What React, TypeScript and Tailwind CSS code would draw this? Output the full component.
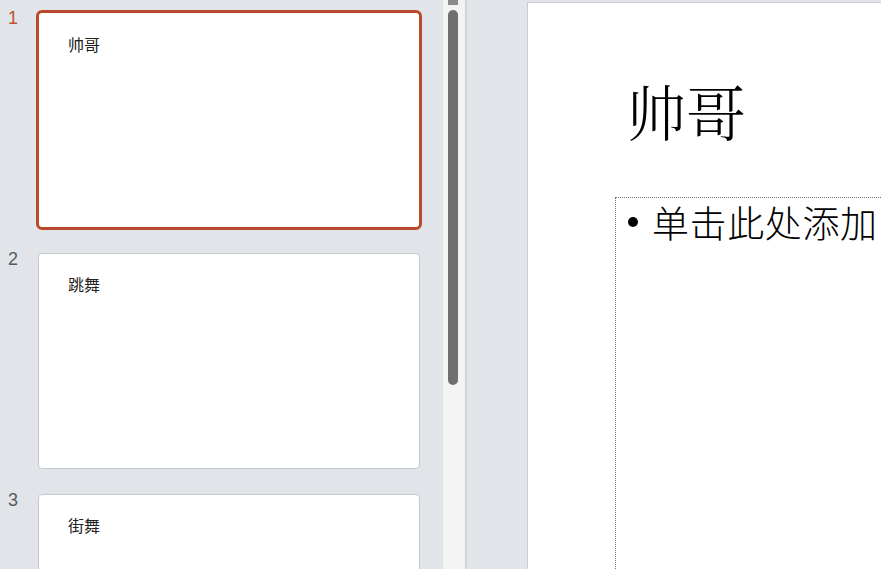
import React from "react";

type Slide = { title: string };

const slides: Slide[] = [{ title: "帅哥" }, { title: "跳舞" }, { title: "街舞" }];

const cjk = { fontFamily: '"Noto Sans CJK SC", "Noto Sans", sans-serif' };

function Thumb({ slide, index, active }: { slide: Slide; index: number; active: boolean }) {
  return (
    <div className="flex h-[241px] shrink-0">
      <div
        className={`w-[36px] pl-[8px] text-[18px] leading-[16px] ${
          active ? "text-[#c0502f]" : "text-[#555a60]"
        }`}
        style={{ fontFamily: '"Liberation Sans", sans-serif' }}
      >
        {index + 1}
      </div>
      <div className={`h-[220px] w-[386px] ${active ? "" : "p-[2px]"}`}>
        <div
          className={`h-full w-full bg-white ${
            active ? "rounded-[6px] border-[3px] border-[#b94a2c]" : "rounded-[4px] border border-[#c6c9cd]"
          }`}
        >
          <div
            className={`text-[16px] leading-[18px] text-[#222] ${active ? "pl-[29px] pt-[22px]" : "pl-[29px] pt-[21px]"}`}
            style={cjk}
          >
            {slide.title}
          </div>
        </div>
      </div>
    </div>
  );
}

export default function App() {
  return (
    <div className="flex h-[569px] w-[881px] overflow-hidden bg-[#e1e5ea]">
      {/* slide thumbnails */}
      <div className="flex w-[443px] shrink-0 flex-col overflow-hidden pt-[10px]">
        {slides.map((s, i) => (
          <Thumb key={i} slide={s} index={i} active={i === 0} />
        ))}
      </div>

      {/* vertical scrollbar */}
      <div className="flex w-[22px] shrink-0 flex-col items-center bg-[#f3f3f3] pr-[2px]">
        <div className="h-[5px] w-[10px] bg-[#8a8a8a]" />
        <div className="mt-[5px] h-[375px] w-[10px] rounded-full bg-[#6f6f6f]" />
      </div>
      <div className="w-[2px] shrink-0 bg-[#cfd3d8]" />

      {/* editing canvas */}
      <div className="flex flex-1 overflow-hidden pl-[60px] pt-[2px]">
        <div className="flex-1 border-l border-t border-[#c9ccd0] bg-white">
          <div
            className="pl-[98px] pt-[70px] text-[60px] font-light leading-[74px] text-black"
            style={{ fontFamily: '"Noto Serif CJK SC", "Noto Sans CJK SC", serif' }}
          >
            帅哥
          </div>
          <div className="ml-[87px] mt-[50px] h-[400px] border-l border-t border-dotted border-[#707070]">
            <div className="flex items-center pl-[12px] text-[37px] font-light leading-[48px] tracking-[0.6px] text-black whitespace-nowrap" style={cjk}>
              <span className="mr-[14px] h-[10px] w-[10px] rounded-full bg-black" />
              <span>单击此处添加</span>
            </div>
          </div>
        </div>
      </div>
    </div>
  );
}
